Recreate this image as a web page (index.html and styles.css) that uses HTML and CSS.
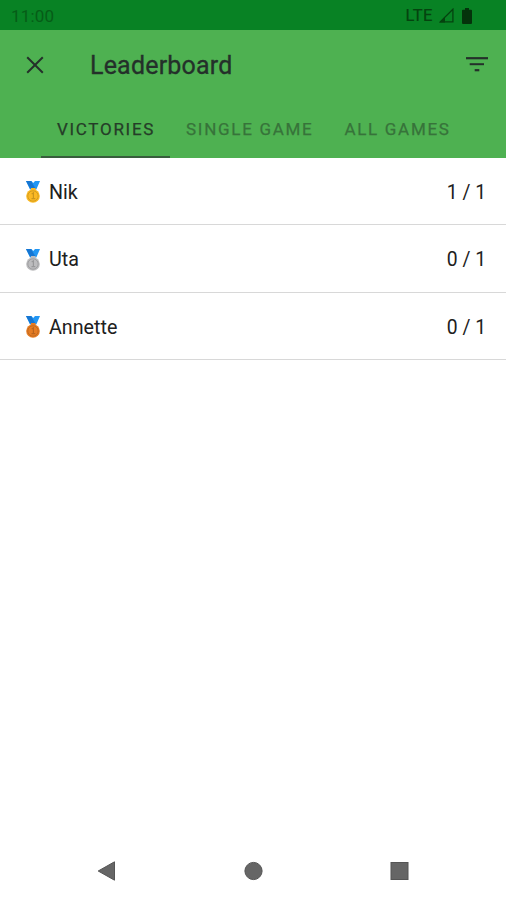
FILE: index.html
```html
<!DOCTYPE html>
<html lang="en">
<head>
    <meta charset="UTF-8">
    <meta name="viewport" content="width=device-width, initial-scale=1.0">
    <title>Leaderboard</title>
    <link rel="stylesheet" href="styles.css">
</head>
<body>
    <!-- shared medal shape, colours are set per row -->
    <svg class="defs" width="0" height="0">
        <symbol id="medal" viewBox="0 0 16 24">
            <path d="M1 1h5.5l1.7 2L10 1h5l-3.7 8.5H5z" fill="#2196f3"/>
            <path d="M1 1h5l4.5 7.5H5z" fill="#1676d2"/>
            <path d="M6 8h4.5v2.5H6z" fill="currentColor"/>
            <circle cx="8" cy="16" r="6.8" fill="currentColor"/>
            <circle class="medal-ring" cx="8" cy="16" r="5.2"/>
            <path class="medal-mark" d="M6.7 14l1.7-1.2v5.7M6.5 18.7h3.8"/>
        </symbol>
    </svg>

    <div class="status-bar">
        <span class="time">11:00</span>
        <div class="status-icons">
            <span class="network">LTE</span>
            <svg class="signal" width="15" height="15" viewBox="0 0 15 15">
                <path d="M1.2 13.9L13.9 1.2v12.7z" fill="none" stroke="currentColor" stroke-width="1.3"/>
                <path d="M.5 14.4L6 8.8v5.6z" fill="currentColor"/>
            </svg>
            <svg class="battery" width="10" height="16" viewBox="0 0 10 16">
                <path d="M3 0h4v1.7h2q1 0 1 1V15q0 1-1 1H1q-1 0-1-1V2.7q0-1 1-1h2z" fill="currentColor"/>
            </svg>
        </div>
    </div>

    <header class="header">
        <div class="toolbar">
            <button class="icon-button" aria-label="Close">
                <svg width="18" height="18" viewBox="0 0 18 18">
                    <path d="M1.2 1.2l15.6 15.6M16.8 1.2L1.2 16.8" stroke="currentColor" stroke-width="2"/>
                </svg>
            </button>
            <h1 class="title">Leaderboard</h1>
            <button class="icon-button" aria-label="Filter">
                <svg width="22" height="16" viewBox="0 0 22 16">
                    <path d="M0 1.2h22" stroke="currentColor" stroke-width="2.2"/>
                    <path d="M3.7 7.2h14.3" stroke="currentColor" stroke-width="2"/>
                    <path d="M8.7 13.2h4.6" stroke="currentColor" stroke-width="2.2"/>
                </svg>
            </button>
        </div>
        <nav class="tabs">
            <button class="tab active">VICTORIES</button>
            <button class="tab">SINGLE GAME</button>
            <button class="tab">ALL GAMES</button>
        </nav>
    </header>

    <main class="list">
        <div class="row">
            <svg class="medal gold"><use href="#medal"/></svg>
            <span class="name">Nik</span>
            <span class="score">1 / 1</span>
        </div>
        <div class="row">
            <svg class="medal silver"><use href="#medal"/></svg>
            <span class="name">Uta</span>
            <span class="score">0 / 1</span>
        </div>
        <div class="row">
            <svg class="medal bronze"><use href="#medal"/></svg>
            <span class="name">Annette</span>
            <span class="score">0 / 1</span>
        </div>
    </main>

    <footer class="nav-bar">
        <svg width="20" height="22" viewBox="0 0 20 22">
            <path d="M1.2 11L17.5 1.8v18.4z"/>
        </svg>
        <svg width="20" height="22" viewBox="0 0 20 22">
            <circle cx="10.5" cy="11" r="8.6"/>
        </svg>
        <svg width="20" height="22" viewBox="0 0 20 22">
            <rect x="2" y="2.5" width="17" height="17"/>
        </svg>
    </footer>
</body>
</html>
```

FILE: styles.css
```css
* {
    box-sizing: border-box;
}
body {
    display: flex;
    flex-direction: column;
    height: 100vh;
    margin: 0;
    background: #fff;
    color: #202020;
    font-family: Roboto, Arial, sans-serif;
}
button {
    padding: 0;
    border: 0;
    background: none;
    color: inherit;
    font-family: inherit;
}
svg {
    display: block;
}
.defs {
    position: absolute;
}
.status-bar {
    display: flex;
    justify-content: space-between;
    align-items: center;
    height: 30px;
    padding: 1px 34px 0 11px;
    background: #088224;
    color: #05430f;
    font-size: 17px;
}
.time {
    color: #065c17;
    letter-spacing: 0.2px;
}
.status-icons {
    display: flex;
    align-items: center;
}
.network {
    font-size: 16.5px;
    -webkit-text-stroke: 0.2px;
    letter-spacing: 0.5px;
}
.signal {
    margin-left: 6px;
}
.battery {
    margin-left: 8px;
    color: #04330b;
}
.header {
    height: 127.5px;
    background: #4eb151;
    color: #24302a;
}
.toolbar {
    display: flex;
    align-items: center;
    height: 70px;
    padding: 0 18px 0 26px;
}
.title {
    flex: 1;
    margin: 1px 0 0 46px;
    font-size: 25px;
    font-weight: 400;
    letter-spacing: 0.2px;
    -webkit-text-stroke: 0.3px;
}
.tabs {
    display: flex;
    height: 57.5px;
    padding-left: 41px;
}
.tab {
    height: 57.5px;
    padding: 3px 15px 0 16px;
    border-bottom: 2px solid transparent;
    color: #37733a;
    font-size: 17px;
    font-weight: 400;
    letter-spacing: 1.7px;
    -webkit-text-stroke: 0.25px;
}
.tab.active {
    border-color: #385d3d;
    color: #253c28;
}
.row {
    display: flex;
    align-items: center;
    height: 67.5px;
    padding: 3px 20px 0 25px;
    border-bottom: 1px solid #d8d8d8;
    font-size: 19.7px;
}
.medal {
    width: 16px;
    height: 24px;
}
.medal-ring {
    fill: none;
    stroke: #00000026;
}
.medal-mark {
    fill: none;
    stroke: #00000030;
    stroke-width: 1.2;
}
.gold {
    color: #fbb924;
}
.silver {
    color: #bcbcbe;
}
.bronze {
    color: #e57c24;
}
.name {
    flex: 1;
    margin-left: 8px;
}
.score {
    font-size: 19.3px;
}
.nav-bar {
    display: flex;
    justify-content: space-between;
    align-items: center;
    height: 58px;
    margin-top: auto;
    padding: 0 97px;
}
.nav-bar svg {
    fill: #666;
    stroke: #555;
}
```
